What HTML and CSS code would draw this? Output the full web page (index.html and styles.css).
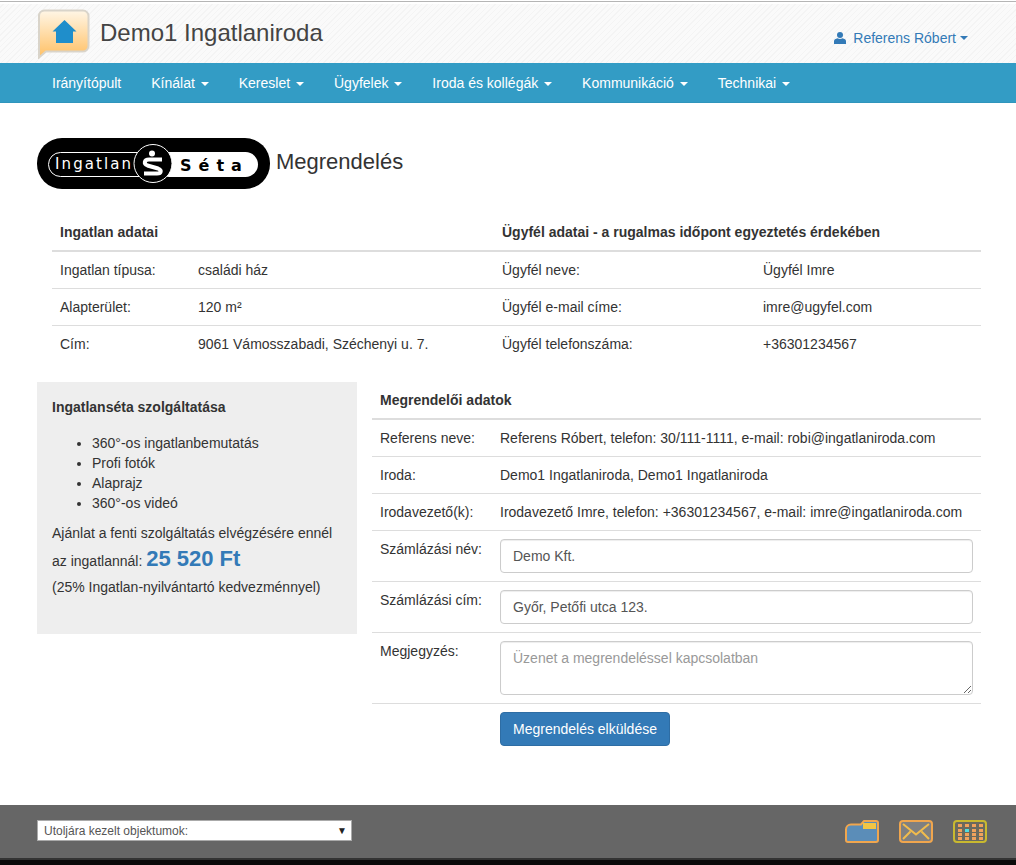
FILE: index.html
```html
<!DOCTYPE html>
<html lang="hu">
<head>
    <meta charset="UTF-8">
    <meta name="viewport" content="width=device-width, initial-scale=1.0">
    <title>Megrendelés</title>
    <link rel="stylesheet" href="styles.css">
</head>
<body>
    <header class="top-bar">
        <div class="brand">
            <svg class="brand-icon" width="54" height="50" viewBox="0 0 54 50">
                <defs>
                    <linearGradient id="bubble" x1="0" y1="0" x2="0" y2="1">
                        <stop offset="0" stop-color="#fff6e6"/>
                        <stop offset="1" stop-color="#ffc064"/>
                    </linearGradient>
                </defs>
                <path d="M7 1.500H46a5.500 5.500 0 0 1 5.500 5.500V37a5.500 5.500 0 0 1-5.500 5.500H9L2 48.500V7A5.500 5.500 0 0 1 7 1.500Z" fill="url(#bubble)" stroke="#d9d4ca" stroke-width="2"/>
                <path d="M27.500 11 39.500 22.500H36V34H19V22.500H15.500Z" fill="#1f8ecb"/>
            </svg>
            <span class="brand-name">Demo1 Ingatlaniroda</span>
        </div>
        <a class="user-link" href="#">
            <svg class="user-icon" width="12" height="12" viewBox="0 0 12 12">
                <circle cx="6" cy="3" r="3" fill="#337ab7"/>
                <path d="M0 12V9.200C0 7.500 1.500 6.600 3.500 6.200 5 7.300 7 7.300 8.500 6.200 10.500 6.600 12 7.500 12 9.200V12Z" fill="#337ab7"/>
            </svg>
            Referens Róbert<span class="caret"></span>
        </a>
    </header>

    <nav class="main-nav">
        <a href="#">Irányítópult</a>
        <a href="#">Kínálat <span class="caret"></span></a>
        <a href="#">Kereslet <span class="caret"></span></a>
        <a href="#">Ügyfelek <span class="caret"></span></a>
        <a href="#">Iroda és kollégák <span class="caret"></span></a>
        <a href="#">Kommunikáció <span class="caret"></span></a>
        <a href="#">Technikai <span class="caret"></span></a>
    </nav>

    <main class="page">
        <div class="page-title">
            <svg class="seta-logo" width="233" height="51" viewBox="0 0 233 51">
                <rect width="233" height="51" rx="25" fill="#000"/>
                <rect x="11.500" y="14.500" width="110" height="24" rx="12" fill="none" stroke="#fff" stroke-width="1"/>
                <rect x="120" y="14" width="101" height="25" rx="12.500" fill="#fff"/>
                <circle cx="116" cy="25.500" r="19" fill="#000" stroke="#fff" stroke-width="1"/>
                <text class="logo-left" x="18" y="31">Ingatlan</text>
                <text class="logo-right" x="143" y="33">Séta</text>
                <circle cx="115" cy="15.500" r="3" fill="#fff"/>
                <path d="M125 21.500H112C107 21.500 106.500 26 110.500 27.500L121 30.500C125 32 124.500 35.500 120 35.500H107" fill="none" stroke="#fff" stroke-width="4"/>
            </svg>
            <h1>Megrendelés</h1>
        </div>

        <table class="data-table property-table">
            <colgroup>
                <col class="col-a">
                <col class="col-b">
                <col class="col-c">
                <col>
            </colgroup>
            <thead>
                <tr>
                    <th colspan="2">Ingatlan adatai</th>
                    <th colspan="2">Ügyfél adatai - a rugalmas időpont egyeztetés érdekében</th>
                </tr>
            </thead>
            <tbody>
                <tr>
                    <td>Ingatlan típusa:</td>
                    <td>családi ház</td>
                    <td>Ügyfél neve:</td>
                    <td>Ügyfél Imre</td>
                </tr>
                <tr>
                    <td>Alapterület:</td>
                    <td>120 m²</td>
                    <td>Ügyfél e-mail címe:</td>
                    <td>imre@ugyfel.com</td>
                </tr>
                <tr>
                    <td>Cím:</td>
                    <td>9061 Vámosszabadi, Széchenyi u. 7.</td>
                    <td>Ügyfél telefonszáma:</td>
                    <td>+36301234567</td>
                </tr>
            </tbody>
        </table>

        <div class="order-row">
            <aside class="offer-box">
                <h4>Ingatlanséta szolgáltatása</h4>
                <ul>
                    <li>360°-os ingatlanbemutatás</li>
                    <li>Profi fotók</li>
                    <li>Alaprajz</li>
                    <li>360°-os videó</li>
                </ul>
                <p>Ajánlat a fenti szolgáltatás elvégzésére ennél</p>
                <p class="price-line">az ingatlannál: <strong class="price">25 520 Ft</strong></p>
                <p>(25% Ingatlan-nyilvántartó kedvezménnyel)</p>
            </aside>

            <form class="order-form">
                <table class="data-table">
                    <colgroup>
                        <col class="col-label">
                        <col>
                    </colgroup>
                    <thead>
                        <tr>
                            <th colspan="2">Megrendelői adatok</th>
                        </tr>
                    </thead>
                    <tbody>
                        <tr>
                            <td>Referens neve:</td>
                            <td>Referens Róbert, telefon: 30/111-1111, e-mail: robi@ingatlaniroda.com</td>
                        </tr>
                        <tr>
                            <td>Iroda:</td>
                            <td>Demo1 Ingatlaniroda, Demo1 Ingatlaniroda</td>
                        </tr>
                        <tr>
                            <td>Irodavezető(k):</td>
                            <td>Irodavezető Imre, telefon: +36301234567, e-mail: imre@ingatlaniroda.com</td>
                        </tr>
                        <tr>
                            <td>Számlázási név:</td>
                            <td><input type="text" class="form-control" value="Demo Kft."></td>
                        </tr>
                        <tr>
                            <td>Számlázási cím:</td>
                            <td><input type="text" class="form-control" value="Győr, Petőfi utca 123."></td>
                        </tr>
                        <tr>
                            <td>Megjegyzés:</td>
                            <td><textarea class="form-control note" placeholder="Üzenet a megrendeléssel kapcsolatban"></textarea></td>
                        </tr>
                        <tr>
                            <td></td>
                            <td><button type="button" class="btn-send">Megrendelés elküldése</button></td>
                        </tr>
                    </tbody>
                </table>
            </form>
        </div>
    </main>

    <footer class="footer">
        <div class="recent-select">
            <select>
                <option>Utoljára kezelt objektumok:</option>
            </select>
        </div>
        <div class="footer-icons">
            <svg width="34" height="23" viewBox="0 0 34 23">
                <path d="M6 4.500H16L19 1H31A2 2 0 0 1 33 3V20A2 2 0 0 1 31 22H3A2 2 0 0 1 1 20V9.500A5 5 0 0 1 6 4.500Z" fill="#5b8db8" stroke="#f0a64e" stroke-width="2"/>
                <rect x="18" y="3" width="13" height="6" fill="#f2c544"/>
            </svg>
            <svg width="34" height="23" viewBox="0 0 34 23">
                <rect x="1" y="1" width="32" height="21" rx="3" fill="#808080" stroke="#f0a64e" stroke-width="2"/>
                <path d="M4 4 17 14.500 30 4M4 19 11.500 11.500M30 19 22.500 11.500" fill="none" stroke="#f2bc4c" stroke-width="2"/>
            </svg>
            <svg width="34" height="23" viewBox="0 0 34 23">
                <rect x="1" y="1" width="32" height="21" rx="3" fill="#6a6a5e" stroke="#c9b92f" stroke-width="2"/>
                <g fill="#f0a25c">
                    <rect x="5" y="4" width="4" height="3"/><rect x="12" y="4" width="4" height="3"/><rect x="19" y="4" width="4" height="3"/><rect x="26" y="4" width="4" height="3"/>
                    <rect x="5" y="9" width="4" height="3"/><rect x="19" y="9" width="4" height="3"/><rect x="26" y="9" width="4" height="3"/>
                    <rect x="5" y="13" width="4" height="3"/><rect x="12" y="13" width="4" height="3"/><rect x="19" y="13" width="4" height="3"/><rect x="26" y="13" width="4" height="3"/>
                    <rect x="5" y="17" width="4" height="3"/><rect x="12" y="17" width="4" height="3"/><rect x="19" y="17" width="4" height="3"/><rect x="26" y="17" width="4" height="3"/>
                </g>
                <rect x="12" y="9" width="4" height="3" fill="#4fdde0"/>
            </svg>
        </div>
    </footer>
    <div class="footer-strip"></div>
</body>
</html>
```

FILE: styles.css
```css
* {
    box-sizing: border-box;
}
body {
    font-family: "Liberation Sans", Arial, sans-serif;
    font-size: 14px;
    line-height: 20px;
    color: #333;
    margin: 0;
    background-color: #fff;
}
a {
    text-decoration: none;
}
.caret {
    display: inline-block;
    width: 0;
    height: 0;
    margin-left: 2px;
    vertical-align: middle;
    border-top: 4px solid;
    border-right: 4px solid transparent;
    border-left: 4px solid transparent;
}

/* top bar */
.top-bar {
    display: flex;
    justify-content: space-between;
    align-items: flex-start;
    height: 63px;
    padding: 7px 48px 0 37px;
    border-top: 1px solid #fff;
    background-color: #f8f8f8;
    background-image: repeating-linear-gradient(135deg, #f4f4f4 0, #f4f4f4 1px, #fafafa 1px, #fafafa 4px);
    box-shadow: inset 0 1px 0 #b5b5b5, inset 0 3px 0 #fff;
}
.brand {
    display: flex;
    align-items: flex-start;
    gap: 9px;
}
.brand-icon {
    margin-top: 1px;
}
.brand-name {
    font-size: 24px;
    line-height: 34px;
    margin-top: 8px;
    color: #444;
}
.user-link {
    display: flex;
    align-items: center;
    margin-top: 20px;
    color: #337ab7;
}
.user-icon {
    margin-right: 7px;
}
.user-link .caret {
    margin-left: 4px;
}

/* main menu */
.main-nav {
    display: flex;
    height: 40px;
    padding: 0 37px;
    background-color: #339cc5;
    border-bottom: 1px solid #2f95bc;
}
.main-nav a {
    padding: 10px 15px;
    color: #fff;
}

/* page */
.page {
    padding: 35px 35px 0 37px;
}
.page-title {
    display: flex;
    align-items: center;
    gap: 6px;
    height: 51px;
    margin-bottom: 25px;
}
.page-title h1 {
    margin: 0 0 4px;
    font-size: 22px;
    font-weight: normal;
    color: #333;
}
.seta-logo text {
    font-family: "DejaVu Sans", sans-serif;
}
.logo-left {
    font-size: 15px;
    letter-spacing: 2.100px;
    fill: #fff;
}
.logo-right {
    font-size: 16px;
    font-weight: bold;
    letter-spacing: 7px;
    fill: #000;
}

/* tables */
.data-table {
    width: 100%;
    border-collapse: collapse;
    table-layout: fixed;
}
.data-table th {
    padding: 8px;
    text-align: left;
    border-bottom: 2px solid #ddd;
}
.data-table td {
    padding: 8px;
    vertical-align: top;
    border-top: 1px solid #ddd;
}
.data-table tbody tr:first-child td {
    border-top: 0;
}
.property-table {
    width: 929px;
    margin-left: 15px;
    margin-bottom: 20px;
}
.col-a {
    width: 138px;
}
.col-b {
    width: 304px;
}
.col-c {
    width: 261px;
}
.col-label {
    width: 120px;
}

/* lower part */
.order-row {
    display: flex;
    align-items: flex-start;
    gap: 15px;
}
.offer-box {
    flex: none;
    width: 320px;
    height: 252px;
    padding: 15px;
    background-color: #eee;
}
.offer-box h4 {
    margin: 0 0 16px;
    font-size: 14px;
    line-height: 20px;
}
.offer-box ul {
    margin: 0 0 10px;
    padding-left: 40px;
}
.offer-box p {
    margin: 0;
}
.offer-box .price-line {
    line-height: 31px;
}
.price {
    font-size: 22px;
    color: #337ab7;
}
.order-form {
    flex: 1;
}
.form-control {
    display: block;
    width: 100%;
    height: 34px;
    padding: 6px 12px;
    font-family: inherit;
    font-size: 14px;
    line-height: 20px;
    color: #555;
    background-color: #fff;
    border: 1px solid #ccc;
    border-radius: 4px;
    box-shadow: inset 0 1px 1px rgba(0, 0, 0, 0.075);
}
.form-control::placeholder {
    color: #999;
}
.note {
    height: 54px;
}
.btn-send {
    display: block;
    height: 34px;
    padding: 6px 12px;
    font-family: inherit;
    font-size: 14px;
    line-height: 20px;
    color: #fff;
    background-color: #337ab7;
    border: 1px solid #2e6da4;
    border-radius: 4px;
    cursor: pointer;
}

/* footer */
.footer {
    display: flex;
    justify-content: space-between;
    align-items: flex-start;
    height: 53px;
    margin-top: 51px;
    padding: 15px 29px 0 37px;
    background-color: #666;
}
.recent-select {
    position: relative;
    width: 315px;
}
.recent-select select {
    display: block;
    width: 100%;
    height: 21px;
    padding: 0 0 0 6px;
    font-family: inherit;
    font-size: 12px;
    color: #555;
    background-color: #fff;
    border: 1px solid #aaa;
    border-radius: 0;
    appearance: none;
}
.recent-select::after {
    content: "▼";
    position: absolute;
    right: 5px;
    top: 0;
    font-size: 10px;
    line-height: 21px;
    color: #222;
    pointer-events: none;
}
.footer-icons {
    display: flex;
    gap: 20px;
}
.footer-strip {
    height: 7px;
    background-color: #0a0a0a;
    border-top: 2px solid #333;
}
```
